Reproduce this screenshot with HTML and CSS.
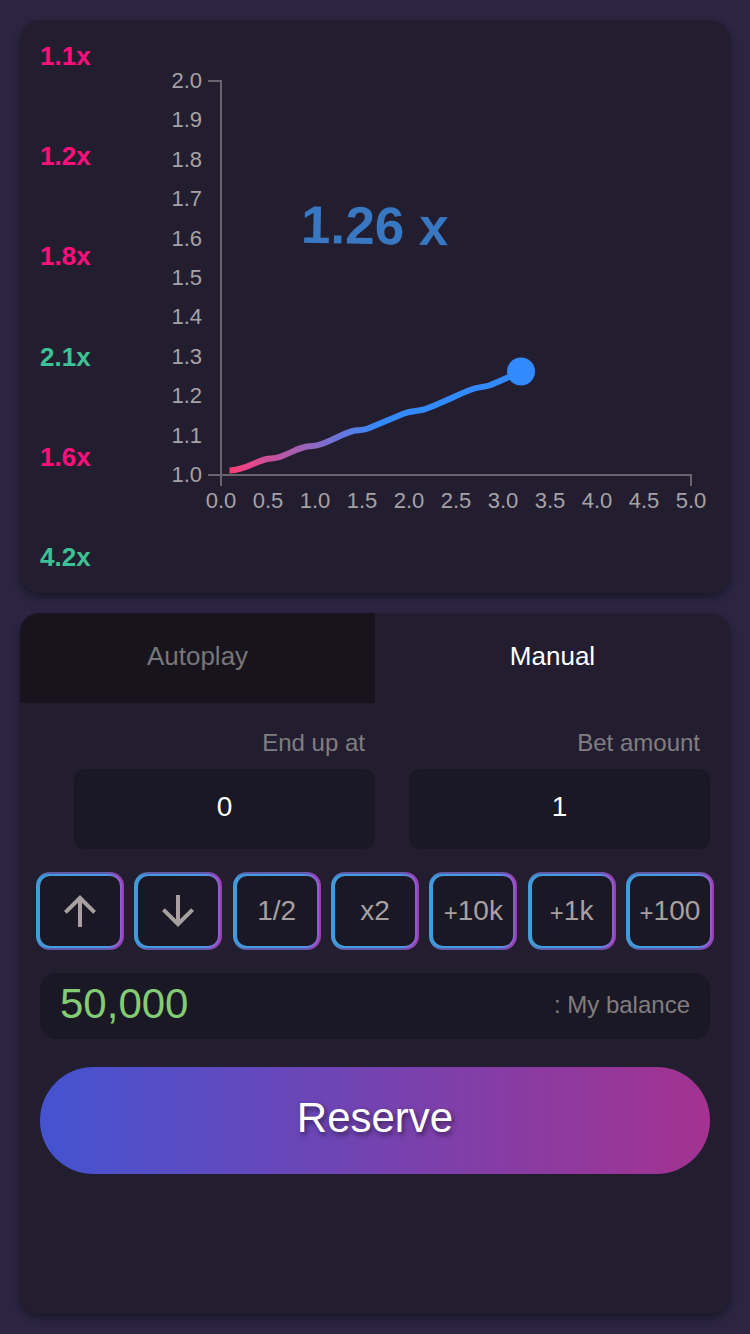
FILE: index.html
```html
<!DOCTYPE html>
<html lang="en">
<head>
<meta charset="utf-8">
<meta name="viewport" content="width=device-width, initial-scale=1">
<title>Crash</title>
<link rel="stylesheet" href="styles.css">
</head>
<body>
<main class="game">
  <section class="card board">
    <ul class="history">
      <li class="low">1.1x</li>
      <li class="low">1.2x</li>
      <li class="low">1.8x</li>
      <li class="high">2.1x</li>
      <li class="low">1.6x</li>
      <li class="high">4.2x</li>
    </ul>
    <svg class="chart" viewBox="0 0 610 533" role="img" aria-label="Multiplier over time">
      <defs>
        <linearGradient id="trace" gradientUnits="userSpaceOnUse" x1="110" y1="0" x2="260" y2="0">
          <stop offset="0" stop-color="#ff3d77"/>
          <stop offset="1" stop-color="#338aff"/>
        </linearGradient>
      </defs>
      <g class="axis-line">
        <path d="M88 41H101V446"/>
        <path d="M88 435H571V446"/>
      </g>
      <g class="axis-text axis-y">
        <text x="82" y="48">2.0</text>
        <text x="82" y="87">1.9</text>
        <text x="82" y="127">1.8</text>
        <text x="82" y="166">1.7</text>
        <text x="82" y="206">1.6</text>
        <text x="82" y="245">1.5</text>
        <text x="82" y="284">1.4</text>
        <text x="82" y="324">1.3</text>
        <text x="82" y="363">1.2</text>
        <text x="82" y="403">1.1</text>
        <text x="82" y="442">1.0</text>
      </g>
      <g class="axis-text axis-x">
        <text x="101" y="468">0.0</text>
        <text x="148" y="468">0.5</text>
        <text x="195" y="468">1.0</text>
        <text x="242" y="468">1.5</text>
        <text x="289" y="468">2.0</text>
        <text x="336" y="468">2.5</text>
        <text x="383" y="468">3.0</text>
        <text x="430" y="468">3.5</text>
        <text x="477" y="468">4.0</text>
        <text x="524" y="468">4.5</text>
        <text x="571" y="468">5.0</text>
      </g>
      <path class="trace" d="M109.500 430.500C125 430 135 421.500 147 419C151 418.200 154 418.600 160 416.800C171 413 176 409 185 407C190 406 194 406.600 200 404.500C212 400.500 222 394 233 391C238 389.900 242 390.800 248 388.500L284 373.500C292 370.500 296 371.500 304 369.500C320 364 338 354.500 350 350C358 346.500 362 347.800 369 345.500C380 341.500 390 336 401 332"/>
      <circle class="trace-head" cx="401" cy="331.500" r="14"/>
      <text class="multiplier" x="181" y="204" transform="rotate(1 254 190)">1.26 x</text>
    </svg>
  </section>

  <section class="card controls">
    <div class="tabs" role="tablist">
      <button class="tab" type="button" role="tab" aria-selected="false">Autoplay</button>
      <button class="tab active" type="button" role="tab" aria-selected="true">Manual</button>
    </div>
    <form class="bet">
      <div class="fields">
        <div class="field">
          <label for="end">End up at</label>
          <input id="end" type="text" inputmode="decimal" value="0">
        </div>
        <div class="field">
          <label for="amount">Bet amount</label>
          <input id="amount" type="text" inputmode="numeric" value="1">
        </div>
      </div>
      <div class="steps">
        <button class="step" type="button" aria-label="Increase"><svg class="arrow" viewBox="0 0 24 24"><path d="M4 12l1.410 1.410L11 7.830V20h2V7.830l5.580 5.590L20 12l-8-8-8 8z"/></svg></button>
        <button class="step" type="button" aria-label="Decrease"><svg class="arrow" viewBox="0 0 24 24"><path d="M20 12l-1.410-1.410L13 16.170V4h-2v12.170l-5.580-5.590L4 12l8 8 8-8z"/></svg></button>
        <button class="step" type="button">1/2</button>
        <button class="step" type="button">x2</button>
        <button class="step" type="button"><span class="plus">+</span>10k</button>
        <button class="step" type="button"><span class="plus">+</span>1k</button>
        <button class="step" type="button"><span class="plus">+</span>100</button>
      </div>
      <div class="balance">
        <output class="balance-value">50,000</output>
        <span class="balance-label">: My balance</span>
      </div>
      <button class="reserve" type="submit">Reserve</button>
    </form>
  </section>
</main>
</body>
</html>
```
FILE: styles.css
```css
* {
  box-sizing: border-box;
}

body {
  margin: 0;
  background: #2b2542;
  color: #fff;
  font-family: "Liberation Sans", Arial, sans-serif;
}

button,
input {
  border: 0;
  font-family: inherit;
}

.game {
  display: flex;
  flex-direction: column;
  gap: 20px;
  min-height: 100vh;
  padding: 20px;
}

.card {
  background: #231e2f;
  border-radius: 20px;
  box-shadow: 0 4px 8px rgba(0, 0, 0, 0.4);
}

.board {
  display: flex;
  padding: 20px 0;
}

.history {
  display: flex;
  flex-direction: column;
  justify-content: space-between;
  width: 100px;
  margin: 0;
  padding: 0 0 0 20px;
  list-style: none;
  font-size: 26px;
  font-weight: 700;
  line-height: 32px;
}

.low {
  color: #ff0f7b;
}

.high {
  color: #3cc296;
}

.chart {
  flex: 1;
  min-width: 0;
}

.axis-line {
  fill: none;
  stroke: #69656f;
  stroke-width: 2;
}

.axis-text {
  fill: #a5a2a8;
  font-size: 22px;
}

.axis-y {
  text-anchor: end;
}

.axis-x {
  text-anchor: middle;
}

.trace {
  fill: none;
  stroke: url(#trace);
  stroke-width: 6;
}

.trace-head {
  fill: #338aff;
}

.multiplier {
  fill: #3878c2;
  font-size: 53px;
  font-weight: 700;
}

.controls {
  flex: 1;
  overflow: hidden;
}

.tabs {
  display: grid;
  grid-template-columns: 1fr 1fr;
}

.tab {
  height: 90px;
  padding-bottom: 4px;
  background: #18141e;
  color: #777;
  font-size: 26px;
}

.tab.active {
  background: transparent;
  color: #fff;
}

.bet {
  display: flex;
  flex-direction: column;
  padding: 24px 20px;
}

.fields {
  display: grid;
  grid-template-columns: 1fr 1fr;
  gap: 34px;
  padding-left: 34px;
}

.field {
  display: flex;
  flex-direction: column;
  gap: 10px;
}

.field label {
  padding-right: 10px;
  color: #807e80;
  font-size: 24px;
  line-height: 32px;
  text-align: right;
}

.field input {
  width: 100%;
  height: 80px;
  padding: 0 10px 4px;
  border-radius: 10px;
  background: #1b1825;
  color: #fff;
  font-size: 28px;
  text-align: center;
}

.steps {
  display: flex;
  justify-content: space-between;
  margin: 23px -4px;
}

.step {
  display: flex;
  align-items: center;
  justify-content: center;
  width: 88px;
  height: 78px;
  padding: 2px;
  border: 2px solid transparent;
  border-radius: 14px;
  background:
    linear-gradient(#1b1825, #1b1825) content-box,
    linear-gradient(90deg, #419cdb, #4a9be2 80%, #8a60d0 96%) padding-box,
    linear-gradient(90deg, #419cdb 2px, #5f5aab 14px, #5f5aab 70px, #a03bb5 86px) border-box;
  color: #a8a0a0;
  font-size: 28px;
  line-height: 32px;
}

.plus {
  padding-top: 4px;
  font-size: 24px;
}

.arrow {
  width: 48px;
  height: 48px;
  fill: currentColor;
}

.balance {
  display: flex;
  align-items: center;
  justify-content: space-between;
  height: 66px;
  padding: 0 20px 2px;
  border-radius: 16px;
  background: #1b1825;
}

.balance-value {
  padding-bottom: 2px;
  color: #84cc74;
  font-size: 42px;
}

.balance-label {
  color: #807e80;
  font-size: 24px;
}

.reserve {
  height: 107px;
  margin-top: 28px;
  padding-bottom: 6px;
  border-radius: 54px;
  background: linear-gradient(90deg, #4453d1, #a43290);
  color: #fff;
  font-size: 42px;
  text-shadow: 2px 3px 5px rgba(0, 0, 0, 0.5);
}
```
